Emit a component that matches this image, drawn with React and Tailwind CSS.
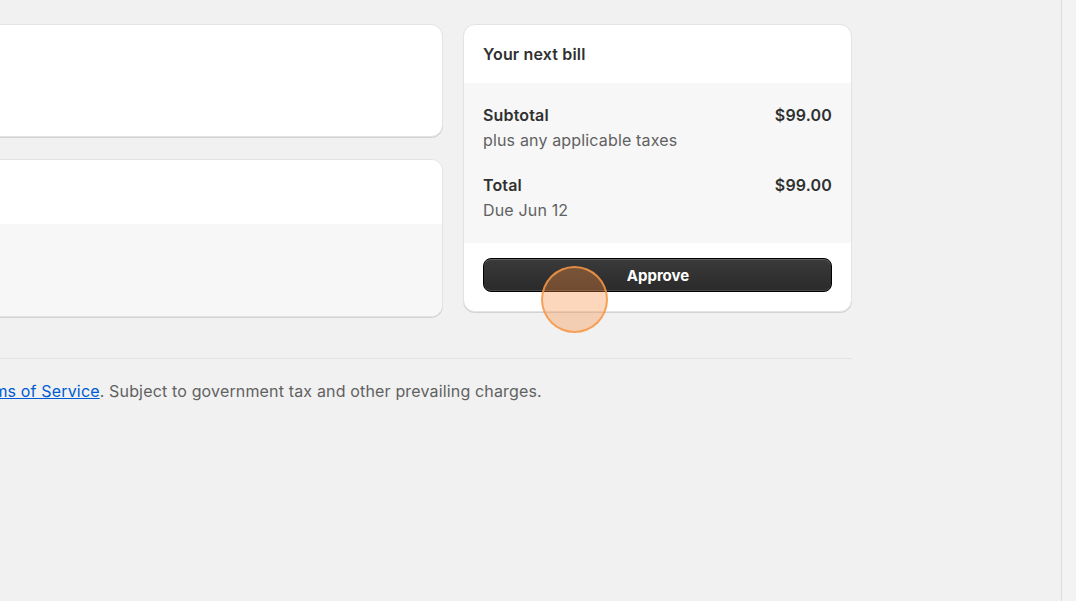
import React from 'react';

const card = 'bg-white rounded-xl border border-[#e3e3e3] shadow-[0_1px_0_rgba(0,0,0,0.12)]';

const BillRow = ({ label, amount, note }) => (
  <div className="flex justify-between">
    <div>
      <div className="font-semibold text-[#303030]">{label}</div>
      <div className="text-[#616161]">{note}</div>
    </div>
    <div className="font-semibold text-[#303030]">{amount}</div>
  </div>
);

export default function App() {
  return (
    <div
      className="flex h-[601px] w-[1076px] overflow-hidden bg-[#f1f1f1] text-[16px] leading-[25px] tracking-[0.01em]"
      style={{ fontFamily: 'Inter, "Noto Sans", sans-serif' }}
    >
      <main className="flex-1 min-w-0 overflow-hidden">
        <div className="ml-[-400px] w-[1252px] pt-6">
          <div className="flex gap-[20px] items-start">
            <div className="flex-1 flex flex-col gap-[22px]">
              <section className={`${card} h-[113px]`} />
              <section className={`${card} h-[158px] flex flex-col overflow-hidden`}>
                <div className="h-[64px] bg-white" />
                <div className="flex-1 bg-[#f7f7f7]" />
              </section>
            </div>
            <aside className={`${card} w-[389px]`}>
              <div className="h-[58px] px-[19px] pt-px flex items-center text-[16px] font-semibold text-[#303030]">
                Your next bill
              </div>
              <div className="bg-[#f7f7f7] px-[19px] py-5 flex flex-col gap-5">
                <BillRow label="Subtotal" amount="$99.00" note="plus any applicable taxes" />
                <BillRow label="Total" amount="$99.00" note="Due Jun 12" />
              </div>
              <div className="px-[19px] pt-[15px] pb-[19px]">
                <div className="relative">
                  <button className="w-full h-[34px] rounded-lg border border-black bg-gradient-to-b from-[#3a3a3a] to-[#2a2a2a] shadow-[inset_0_1px_0_rgba(255,255,255,0.2),inset_0_-1px_0_rgba(255,255,255,0.15)] text-white text-[15px] font-bold tracking-normal pl-px">
                    Approve
                  </button>
                  <span className="absolute left-[58px] top-[8px] w-[67px] h-[67px] rounded-full bg-[rgba(247,140,60,0.35)] border-2 border-[rgba(245,150,70,0.85)] pointer-events-none" />
                </div>
              </div>
            </aside>
          </div>
          <div className="mt-[41px] border-t border-[#e3e3e3] pt-5 text-[#616161]">
            By proceeding, you are agreeing to the{' '}
            <a href="#" className="text-[#005bd3] underline">Shopify Terms of Service</a>
            . Subject to government tax and other prevailing charges.
          </div>
        </div>
      </main>
      <div className="w-[15px] border-l border-[#dcdcdc] bg-[#f3f3f3]" />
    </div>
  );
}
